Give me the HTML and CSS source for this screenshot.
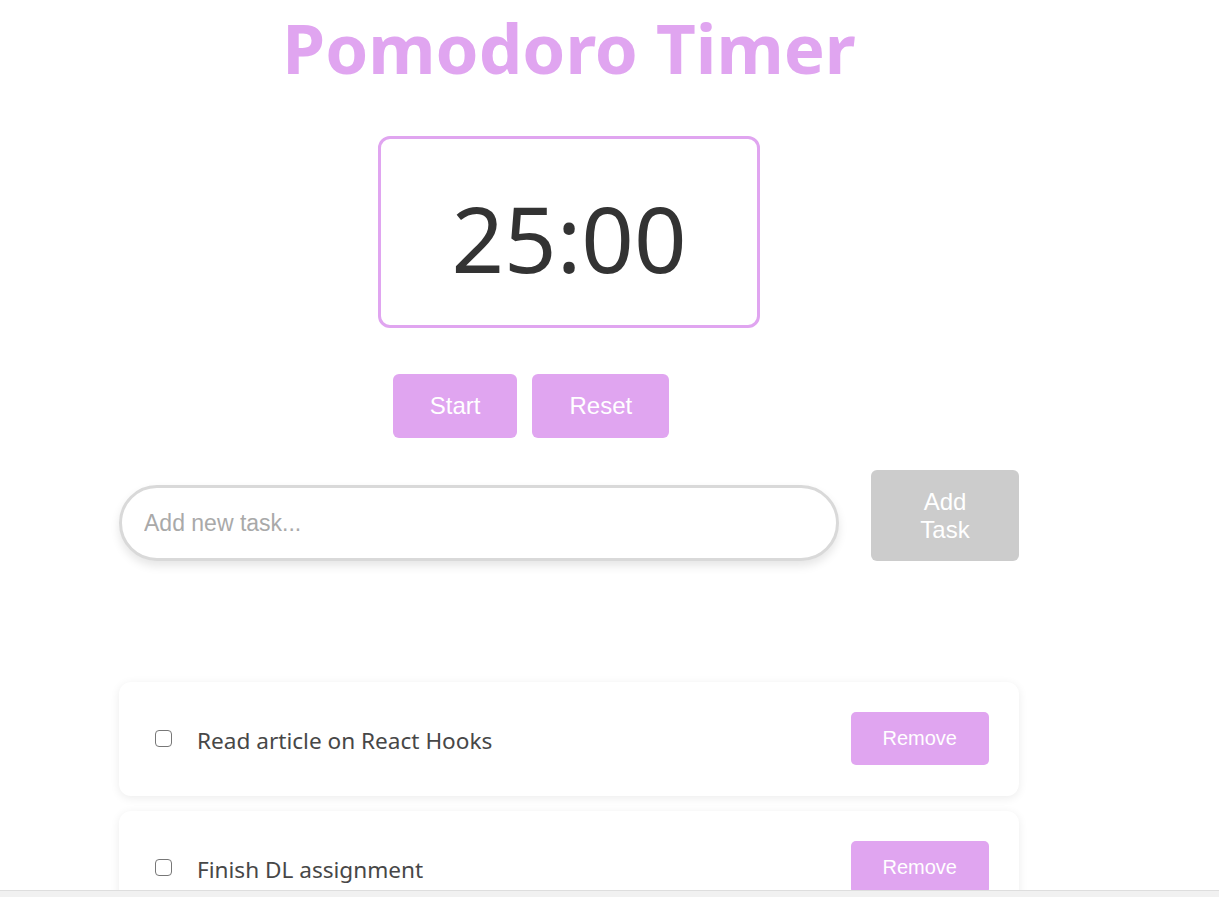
FILE: index.html
```html
<!DOCTYPE html>
<html lang="en">
<head>
<meta charset="utf-8">
<title>Pomodoro Timer</title>
<link rel="stylesheet" href="styles.css">
</head>
<body>
<div class="page">
  <main class="app">
    <h1 class="title">Pomodoro Timer</h1>
    <div class="timer">25:00</div>
    <div class="controls">
      <button class="btn">Start</button>
      <button class="btn">Reset</button>
    </div>
    <div class="add-row">
      <input class="task-input" type="text" placeholder="Add new task...">
      <button class="btn btn-add">Add Task</button>
    </div>
    <ul class="tasks">
      <li class="task">
        <input class="check" type="checkbox">
        <span class="task-text">Read article on React Hooks</span>
        <button class="btn btn-remove">Remove</button>
      </li>
      <li class="task">
        <input class="check" type="checkbox">
        <span class="task-text">Finish DL assignment</span>
        <button class="btn btn-remove">Remove</button>
      </li>
    </ul>
  </main>
</div>
<div class="hscroll"></div>
</body>
</html>
```

FILE: styles.css
```css
* { box-sizing: border-box; }

html, body {
  margin: 0;
  padding: 0;
  background: #ffffff;
  overflow: hidden;
  height: 897px;
}

.page {
  width: 1138px;
}

.app {
  width: 900px;
  margin: 0 auto;
  display: flex;
  flex-direction: column;
  align-items: center;
  font-family: "Noto Sans", "Open Sans", sans-serif;
}

.title {
  margin: 0;
  font-size: 69px;
  line-height: normal;
  font-weight: 700;
  color: #e0a5f0;
  text-align: center;
}

.timer {
  margin-top: 42px;
  width: 382px;
  height: 192px;
  border: 3px solid #e0a5f0;
  border-radius: 12px;
  padding: 53px 0 0;
  font-size: 92px;
  line-height: 92px;
  color: #333333;
  text-align: center;
}

.controls {
  margin-top: 46px;
  display: flex;
  gap: 15px;
  padding-right: 76px;
}

.btn {
  font-family: "Liberation Sans", Arial, sans-serif;
  font-size: 24px;
  color: #ffffff;
  background: #e0a5f0;
  border: none;
  border-radius: 6px;
  padding: 18px 37px;
  cursor: pointer;
}

.add-row {
  margin-top: 32px;
  width: 100%;
  display: flex;
  align-items: flex-start;
  gap: 32px;
}

.task-input {
  flex: 0 0 80%;
  margin-top: 15px;
  height: 76px;
  border: 3px solid #d9d9d9;
  border-radius: 38px;
  padding: 0 22px;
  font-family: "Liberation Sans", Arial, sans-serif;
  font-size: 23px;
  color: #333;
  background: #fff;
  box-shadow: 0 5px 10px rgba(0, 0, 0, 0.1);
  outline: none;
}

.task-input::placeholder {
  color: #a9a9a9;
}

.btn-add {
  flex: 1 1 auto;
  background: #cccccc;
  line-height: 1.15;
}

.tasks {
  list-style: none;
  margin: 121px 0 0;
  padding: 0;
  width: 100%;
  display: flex;
  flex-direction: column;
  gap: 15px;
}

.task {
  display: flex;
  align-items: center;
  background: #ffffff;
  border-radius: 12px;
  padding: 30px 30px 31px 36px;
  box-shadow: 0 2px 10px rgba(0, 0, 0, 0.08);
}

.check {
  appearance: none;
  -webkit-appearance: none;
  width: 17px;
  height: 17px;
  margin: 0 25px 0 0;
  border: 1.5px solid #777777;
  border-radius: 4px;
  background: #fff;
  flex: none;
}

.task-text {
  flex: 1;
  font-size: 22.6px;
  color: #474747;
  padding-top: 3px;
}

.btn-remove {
  font-size: 20px;
  padding: 15px 32px;
  border-radius: 5px;
}

.hscroll {
  position: fixed;
  left: 0;
  right: 0;
  bottom: 0;
  height: 7px;
  background: #f1f1f1;
  border-top: 1px solid #dedede;
}
```
